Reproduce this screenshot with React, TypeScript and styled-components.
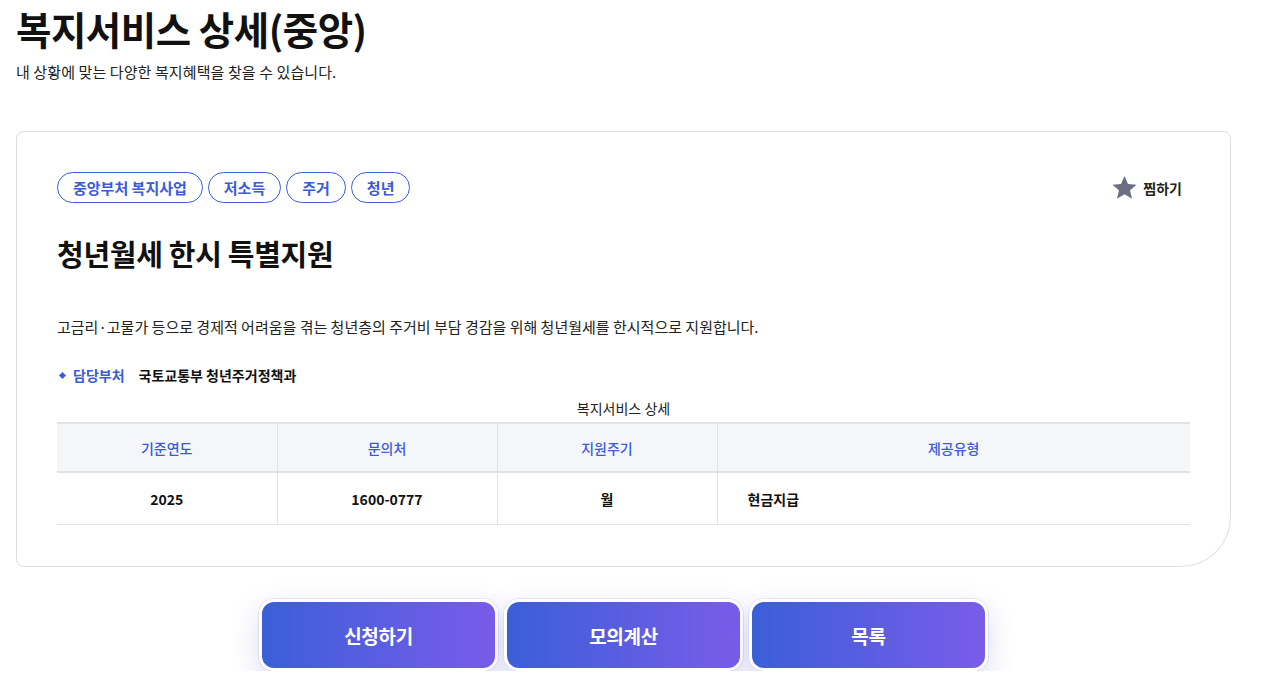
import styled, { createGlobalStyle } from 'styled-components';

const GlobalStyle = createGlobalStyle`
  body {
    margin: 0;
    background: #ffffff;
    font-family: 'Noto Sans CJK KR', 'Noto Sans', sans-serif;
    color: #111;
  }
`;

const Page = styled.div`
  width: 1215px;
  padding: 0 0 0 16px;
`;

const PageTitle = styled.h1`
  margin: 0;
  padding-top: 3px;
  font-size: 38.5px;
  font-weight: 700;
  letter-spacing: -0.5px;
  line-height: 50px;
`;

const PageDesc = styled.p`
  margin: 9px 0 0;
  font-size: 15px;
  line-height: 20px;
  color: #222;
  letter-spacing: 0.1px;
`;

const Card = styled.section`
  margin-top: 49px;
  border: 1px solid #dddddd;
  border-radius: 8px 8px 50px 8px;
  padding: 40px 40px 41px 40px;
`;

const TopRow = styled.div`
  display: flex;
  justify-content: space-between;
  align-items: center;
`;

const Tags = styled.div`
  display: flex;
  gap: 5px;
`;

const Tag = styled.span`
  height: 31px;
  padding: 0 15px;
  box-sizing: border-box;
  border: 1px solid #3b5bdb;
  border-radius: 16px;
  display: flex;
  align-items: center;
  font-size: 15px;
  font-weight: 600;
  color: #3b5bdb;
`;

const Favorite = styled.button`
  border: none;
  background: none;
  display: flex;
  align-items: center;
  gap: 5px;
  padding: 0 8px 0 0;
  font-family: inherit;
  font-size: 14px;
  font-weight: 700;
  color: #222;
  cursor: pointer;
`;

const ServiceTitle = styled.h2`
  margin: 30px 0 0;
  font-size: 29px;
  font-weight: 700;
  letter-spacing: -0.3px;
  line-height: 40px;
`;

const ServiceDesc = styled.p`
  margin: 43px 0 0;
  font-size: 15px;
  line-height: 22px;
  color: #222;
`;

const DeptRow = styled.div`
  margin-top: 27px;
  display: flex;
  align-items: center;
  font-size: 14px;
  line-height: 20px;
`;

const Bullet = styled.span`
  width: 5px;
  height: 5px;
  background: #3b5bdb;
  transform: rotate(45deg);
  margin: 0 8px 0 3px;
`;

const DeptLabel = styled.span`
  color: #3b5bdb;
  font-weight: 600;
  margin-right: 14px;
`;

const DeptValue = styled.span`
  font-weight: 700;
  color: #111;
`;

const Table = styled.table`
  margin-top: 13px;
  width: 100%;
  border-collapse: collapse;
  border-top: 2px solid #e1e2e6;
  font-size: 14px;
`;

const Caption = styled.caption`
  font-size: 14px;
  line-height: 20px;
  padding-bottom: 4px;
  color: #222;
`;

const Th = styled.th<{ $first?: boolean }>`
  height: 47px;
  background: #f5f6fa;
  color: #3b5bdb;
  font-weight: 500;
  border-bottom: 2px solid #e1e2e6;
  border-left: ${(p) => (p.$first ? 'none' : '1px solid #e1e2e6')};
  padding: 0;
`;

const Td = styled.td<{ $left?: boolean; $first?: boolean }>`
  height: 51px;
  font-weight: 700;
  text-align: ${(p) => (p.$left ? 'left' : 'center')};
  padding: ${(p) => (p.$left ? '0 0 0 30px' : '0')};
  border-bottom: 1px solid #e1e2e6;
  border-left: ${(p) => (p.$first ? 'none' : '1px solid #e1e2e6')};
  color: #111;
`;

const Actions = styled.div`
  margin-top: 32px;
  display: flex;
  justify-content: center;
  gap: 6px;
`;

const ActionButton = styled.button`
  width: 239px;
  height: 72px;
  border: 3px solid #ffffff;
  border-radius: 15px;
  background: linear-gradient(90deg, #3a5fd6 0%, #7a5ce9 100%);
  color: #ffffff;
  font-family: inherit;
  font-size: 19px;
  font-weight: 700;
  letter-spacing: -0.3px;
  box-shadow: 0 10px 28px rgba(90, 90, 200, 0.22), 0 0 0 1px rgba(230, 230, 245, 0.8);
  cursor: pointer;
`;

const StarIcon = () => (
  <svg width="27" height="27" viewBox="0 0 24 24" aria-hidden="true">
    <path
      d="M12 1.8l3.1 7.1 7.6.6-5.8 5 1.8 7.5L12 18l-6.7 4 1.8-7.5-5.8-5 7.6-.6z"
      fill="#6b6e82"
    />
  </svg>
);

const tags = ['중앙부처 복지사업', '저소득', '주거', '청년'];
const headers = ['기준연도', '문의처', '지원주기', '제공유형'];

export default function App() {
  return (
    <>
      <GlobalStyle />
      <Page>
        <PageTitle>복지서비스 상세(중앙)</PageTitle>
        <PageDesc>내 상황에 맞는 다양한 복지혜택을 찾을 수 있습니다.</PageDesc>
        <Card>
          <TopRow>
            <Tags>
              {tags.map((t) => (
                <Tag key={t}>{t}</Tag>
              ))}
            </Tags>
            <Favorite>
              <StarIcon />
              찜하기
            </Favorite>
          </TopRow>
          <ServiceTitle>청년월세 한시 특별지원</ServiceTitle>
          <ServiceDesc>
            고금리·고물가 등으로 경제적 어려움을 겪는 청년층의 주거비 부담 경감을 위해 청년월세를 한시적으로 지원합니다.
          </ServiceDesc>
          <DeptRow>
            <Bullet />
            <DeptLabel>담당부처</DeptLabel>
            <DeptValue>국토교통부 청년주거정책과</DeptValue>
          </DeptRow>
          <Table>
            <Caption>복지서비스 상세</Caption>
            <colgroup>
              <col style={{ width: 220 }} />
              <col style={{ width: 220 }} />
              <col style={{ width: 220 }} />
              <col />
            </colgroup>
            <thead>
              <tr>
                {headers.map((h, i) => (
                  <Th key={h} $first={i === 0}>
                    {h}
                  </Th>
                ))}
              </tr>
            </thead>
            <tbody>
              <tr>
                <Td $first>2025</Td>
                <Td>1600-0777</Td>
                <Td>월</Td>
                <Td $left>현금지급</Td>
              </tr>
            </tbody>
          </Table>
        </Card>
        <Actions>
          <ActionButton>신청하기</ActionButton>
          <ActionButton>모의계산</ActionButton>
          <ActionButton>목록</ActionButton>
        </Actions>
      </Page>
    </>
  );
}
